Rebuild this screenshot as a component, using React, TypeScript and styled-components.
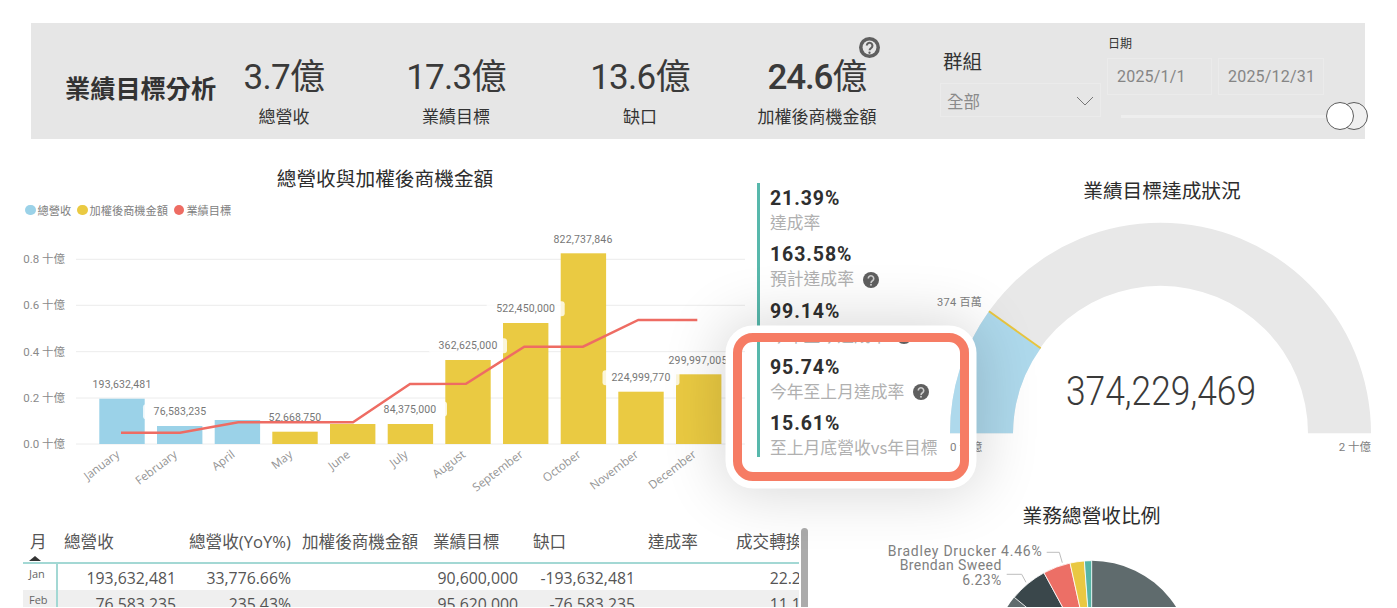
import React from "react";
import styled, { createGlobalStyle } from "styled-components";

const CJK = `"Noto Sans CJK TC", "Noto Sans CJK SC"`;
const DIN = `Roboto, ${CJK}, sans-serif`;
const UI = `"Open Sans", ${CJK}, sans-serif`;

const Global = createGlobalStyle`
  html, body { margin: 0; padding: 0; background: #fff; }
  #root { width: 1397px; height: 608px; overflow: hidden; }
`;

const Page = styled.div`
  width: 1397px;
  height: 608px;
  box-sizing: border-box;
  padding: 23px 0 1px 23px;
  position: relative;
  overflow: hidden;
  background: #fff;
  font-family: ${UI};
  display: flex;
  flex-direction: column;
`;

const Header = styled.header`
  margin-left: 8px;
  width: 1334px;
  height: 116px;
  flex: none;
  background: #e6e6e6;
  display: grid;
  grid-template-columns: 185px 136px 208px 160px 194px 193px 1fr;
  position: relative;
`;

const HeaderTitle = styled.h1`
  margin: 0;
  padding: 47px 0 0 34px;
  font: 700 25.2px/34px ${CJK}, sans-serif;
  color: #333;
  white-space: nowrap;
`;

const Kpi = styled.div`
  display: flex;
  flex-direction: column;
  align-items: center;
  padding-top: 32px;
  position: relative;
`;

const KpiValue = styled.div`
  font: 400 35px/46px ${DIN};
  letter-spacing: -0.7px;
  color: #3a3a3a;
  white-space: nowrap;
`;

const KpiStrong = styled.span`
  font-weight: 500;
  letter-spacing: -1.2px;
`;

const KpiLabel = styled.div`
  font: 400 17px/24px ${CJK}, sans-serif;
  color: #333;
  margin-top: 3px;
  white-space: nowrap;
`;

const KpiHelp = styled.span`
  position: absolute;
  left: 139px;
  top: 14px;
  display: flex;
`;

const Slicer = styled.div`
  display: flex;
  flex-direction: column;
  padding: 24px 0 0 29px;
`;

const SlicerTitle = styled.div`
  font: 400 19.5px/28px ${CJK}, sans-serif;
  color: #333;
`;

const Dropdown = styled.div`
  margin-top: 8px;
  margin-left: -3px;
  width: 161px;
  height: 34px;
  box-sizing: border-box;
  border: 1px solid #ebebeb;
  display: flex;
  align-items: center;
  justify-content: space-between;
  padding: 2px 6px 0 6px;
  font: 400 16.5px/24px ${CJK}, sans-serif;
  color: #8a8a8a;
`;

const DateSlicer = styled.div`
  display: flex;
  flex-direction: column;
  padding-top: 12px;
  position: relative;
`;

const DateTitle = styled.div`
  font: 400 12px/16px ${CJK}, sans-serif;
  color: #333;
  margin-left: 1px;
`;

const DateRow = styled.div`
  margin-top: 7px;
  display: flex;
  gap: 6px;
`;

const DateBox = styled.div<{ $w: number }>`
  width: ${(p) => p.$w}px;
  height: 37px;
  box-sizing: border-box;
  border: 1px solid #ebebeb;
  padding-left: 9px;
  font: 400 16px/35px ${DIN};
  letter-spacing: 0.2px;
  color: #858585;
`;

const Track = styled.div`
  margin: 20px 0 0 14px;
  width: 220px;
  height: 3px;
  background: #eeeeee;
`;

const Handle = styled.span<{ $left: number; $z: number }>`
  position: absolute;
  top: 79px;
  left: ${(p) => p.$left}px;
  z-index: ${(p) => p.$z};
  width: 28px;
  height: 28px;
  box-sizing: border-box;
  border-radius: 50%;
  border: 1.5px solid #5c5c5c;
  background: ${(p) => (p.$z > 1 ? "#ffffff" : "#f0f0f0")};
`;

const TopRow = styled.div`
  display: flex;
  height: 364px;
  flex: none;
`;

const ChartSection = styled.section`
  width: 734px;
  flex: none;
  padding-top: 25px;
`;

const SectionTitle = styled.h2<{ $right?: number; $top?: number }>`
  margin: ${(p) => p.$top ?? 0}px 0 0;
  font: 400 19.7px/28px ${CJK}, sans-serif;
  color: #2d2d2d;
  text-align: center;
  white-space: nowrap;
  padding-right: ${(p) => p.$right ?? 0}px;
`;

const Legend = styled.ul`
  list-style: none;
  margin: 11px 0 0;
  padding: 0 0 0 2px;
  height: 14px;
  display: flex;
  gap: 6px;
`;

const LegendItem = styled.li<{ $color: string }>`
  display: flex;
  align-items: center;
  gap: 2px;
  font: 400 11.2px/14px ${CJK}, sans-serif;
  color: #808080;
  &::before {
    content: "";
    width: 10.5px;
    height: 10.5px;
    border-radius: 50%;
    background: ${(p) => p.$color};
  }
`;

const ChartSvg = styled.svg`
  display: block;
  overflow: visible;
`;

const KpiColumn = styled.aside`
  width: 188px;
  flex: none;
  padding-top: 44px;
`;

const KpiList = styled.div`
  border-left: 3px solid #58b8ac;
  height: 274px;
  box-sizing: border-box;
  padding-left: 10px;
  display: flex;
  flex-direction: column;
  gap: 7.25px;
`;

const RateRow = styled.div`
  padding-top: 3px;
  height: 49px;
  box-sizing: border-box;
`;

const RateValue = styled.div`
  font: 700 19.5px/26px ${DIN};
  letter-spacing: 0.9px;
  color: #2f2f2f;
`;

const RateLabel = styled.div`
  display: flex;
  align-items: center;
  gap: 9px;
  font: 400 16.8px/20px ${CJK}, sans-serif;
  color: #b0b0b0;
  white-space: nowrap;
`;

const GaugeSection = styled.section`
  flex: 1;
  padding-top: 37px;
  margin-left: -1px;
`;

const BottomRow = styled.div`
  display: flex;
  flex: 1;
  min-height: 0;
`;

const TableWrap = styled.section`
  width: 785px;
  flex: none;
  margin-top: 25px;
  position: relative;
  overflow: hidden;
`;

const TableClip = styled.div`
  width: 776px;
  height: 100%;
  overflow: hidden;
`;

const Grid = "35px 125px 113px 131px 100px 115px 88px 95px";

const HeadRow = styled.div`
  width: 802px;
  height: 36px;
  box-sizing: border-box;
  display: grid;
  grid-template-columns: ${Grid};
  border-bottom: 2px solid #a3d8d4;
  position: relative;
`;

const HeadCell = styled.div<{ $pad?: number }>`
  padding-left: ${(p) => p.$pad ?? 6}px;
  font: 400 16.6px/28px ${UI};
  color: #555;
  white-space: nowrap;
  overflow: hidden;
`;

const SortMark = styled.span`
  position: absolute;
  left: 6px;
  top: 28px;
  width: 0;
  height: 0;
  border-left: 6px solid transparent;
  border-right: 6px solid transparent;
  border-bottom: 5px solid #333;
`;

const BodyRow = styled.div<{ $alt?: boolean }>`
  width: 802px;
  height: 26px;
  display: grid;
  grid-template-columns: ${Grid};
  background: ${(p) => (p.$alt ? "#efefef" : "#fff")};
`;

const MonthCell = styled.div`
  border-right: 2px solid #a3d8d4;
  padding-left: 6px;
  font: 400 11px/20px ${UI};
  color: #666;
`;

const NumCell = styled.div<{ $pad: number }>`
  text-align: right;
  padding-right: ${(p) => p.$pad}px;
  font: 400 15.8px/29px ${UI};
  color: #555;
  white-space: nowrap;
`;

const ScrollThumb = styled.span`
  position: absolute;
  right: 0;
  top: 0;
  bottom: 0;
  width: 7px;
  background: #ababab;
  border-radius: 4px 4px 0 0;
`;

const PieSection = styled.section`
  width: 567px;
  flex: none;
  position: relative;
  overflow: hidden;
`;

const Spotlight = styled.div`
  position: absolute;
  left: 733px;
  top: 333px;
  width: 236px;
  height: 148px;
  box-sizing: border-box;
  border: 9.5px solid #f67c64;
  border-radius: 20px;
  box-shadow: 0 0 0 7.5px #fff, 0 0 60px 12px rgba(0, 0, 0, 0.16);
  pointer-events: none;
  z-index: 5;
`;

const RingHelp = () => (
  <svg width={21} height={21} viewBox="0 0 20 20" style={{ flex: "none" }}>
    <circle cx="10" cy="10" r="10" fill="#5f5f5f" />
    <circle cx="10" cy="10" r="6.6" fill="#e6e6e6" />
    <path d="M7.4 8.2a2.7 2.7 0 1 1 4.1 2.3c-1 .6-1.4 1.1-1.4 2.2" fill="none" stroke="#5f5f5f" strokeWidth="2" />
    <circle cx="10" cy="15" r="1.1" fill="#5f5f5f" />
  </svg>
);

const HelpGlyph = styled.svg`
  flex: none;
  margin-top: 3px;
`;

const SolidHelp = () => (
  <HelpGlyph width={16} height={16} viewBox="0 0 20 20">
    <circle cx="10" cy="10" r="10" fill="#5f5f5f" />
    <path d="M6.6 8.2a3.4 3.4 0 1 1 5.2 2.8c-1.2.7-1.7 1.3-1.7 2.6" fill="none" stroke="#cfcfcf" strokeWidth="2" />
    <circle cx="10" cy="16" r="1.2" fill="#cfcfcf" />
  </HelpGlyph>
);

const bars = [
  { m: "January", x: 99.3, top: 398.7, c: "#9bd2e8" },
  { m: "February", x: 157, top: 426, c: "#9bd2e8" },
  { m: "April", x: 214.7, top: 420, c: "#9bd2e8" },
  { m: "May", x: 272.3, top: 431.7, c: "#eaca42" },
  { m: "June", x: 330, top: 424, c: "#eaca42" },
  { m: "July", x: 387.7, top: 424, c: "#eaca42" },
  { m: "August", x: 445.3, top: 360, c: "#eaca42" },
  { m: "September", x: 503, top: 323, c: "#eaca42" },
  { m: "October", x: 560.7, top: 253.3, c: "#eaca42" },
  { m: "November", x: 618.3, top: 391.7, c: "#eaca42" },
  { m: "December", x: 676, top: 374.3, c: "#eaca42" },
];

const dataLabels = [
  { t: "193,632,481", x: 122, y: 384, w: 74 },
  { t: "76,583,235", x: 180, y: 411.7, w: 74 },
  { t: "52,668,750", x: 295, y: 417, w: 66 },
  { t: "84,375,000", x: 410, y: 409, w: 74 },
  { t: "362,625,000", x: 468, y: 345.7, w: 78 },
  { t: "522,450,000", x: 525.7, y: 308.7, w: 78 },
  { t: "822,737,846", x: 583, y: 239, w: 68 },
  { t: "224,999,770", x: 641, y: 377.7, w: 77 },
  { t: "299,997,005", x: 698, y: 360, w: 66 },
];

const axis = [
  { t: "0.8 十億", y: 259.3 },
  { t: "0.6 十億", y: 305.3 },
  { t: "0.4 十億", y: 351.7 },
  { t: "0.2 十億", y: 398 },
  { t: "0.0 十億", y: 444 },
];

const linePts =
  "121,432.7 180,432.7 238.3,422.3 353,422.3 410,384 466,383.7 524.3,346.7 583,346.7 638.3,320 697.3,320";

const Combo = () => (
  <ChartSvg width={734} height={280} viewBox="23 217 734 280">
    {axis.map((a) => (
      <g key={a.t}>
        <line x1={76} x2={745} y1={a.y} y2={a.y} stroke="#ececec" strokeWidth={1} />
        <text x={65} y={a.y + 4} textAnchor="end" fontSize={11.5} fill="#8a8a8a" fontFamily={DIN}>
          {a.t}
        </text>
      </g>
    ))}
    {bars.map((b) => (
      <g key={b.m}>
        <rect x={b.x} y={b.top} width={45.4} height={444 - b.top} fill={b.c} />
        <text
          x={b.x + 21}
          y={456}
          textAnchor="end"
          fontSize={11.6}
          fill="#959595"
          fontFamily={UI}
          transform={`rotate(-37 ${b.x + 21} 456)`}
        >
          {b.m}
        </text>
      </g>
    ))}
    {dataLabels.map((d) => (
      <g key={d.t}>
        <rect x={d.x - d.w / 2} y={d.y - 7.5} width={d.w} height={15} rx={3} fill="#fff" opacity={0.8} />
        <text x={d.x} y={d.y + 3.6} textAnchor="middle" fontSize={10.5} letterSpacing={0.15} fill="#777" fontFamily={DIN}>
          {d.t}
        </text>
      </g>
    ))}
    <polyline points={linePts} fill="none" stroke="#ee6c63" strokeWidth={2.4} />
  </ChartSvg>
);

const Gauge = () => (
  <ChartSvg width={452} height={262} viewBox="945 204 452 262">
    <path d="M951 433.3A210.5 210.5 0 0 1 1372 433.3H1309A147.5 147.5 0 0 0 1014 433.3Z" fill="#e8e8e8" />
    <path d="M951 433.3A210.5 210.5 0 0 1 990 311.3L1041.7 348.3A147.5 147.5 0 0 0 1014 433.3Z" fill="#aed9ec" />
    <line x1={990} y1={311.3} x2={1041.7} y2={348.3} stroke="#e8c53e" strokeWidth={2} />
    <text x={1162} y={405} textAnchor="middle" fontSize={41} fontWeight={300} fill="#3a3a3a" fontFamily={DIN} textLength={190} lengthAdjust="spacingAndGlyphs">
      374,229,469
    </text>
    <text x={983} y={306} textAnchor="end" fontSize={11} letterSpacing={0.3} fill="#808080" fontFamily={DIN}>
      374 百萬
    </text>
    <text x={951} y={451} fontSize={11.5} fill="#808080" fontFamily={DIN}>
      0 十億
    </text>
    <text x={1372} y={451} textAnchor="end" fontSize={11.5} fill="#808080" fontFamily={DIN}>
      2 十億
    </text>
  </ChartSvg>
);

const pieCx = 1091.7;
const pieCy = 660.7;
const pieR = 100;
const polar = (a: number) => {
  const r = (a * Math.PI) / 180;
  return `${(pieCx + pieR * Math.sin(r)).toFixed(2)} ${(pieCy - pieR * Math.cos(r)).toFixed(2)}`;
};
const arc = (a0: number, a1: number) =>
  `M${pieCx} ${pieCy}L${polar(a0)}A${pieR} ${pieR} 0 0 0 ${polar(a1)}Z`;

const Pie = () => (
  <ChartSvg width={567} height={78} viewBox="808 529 567 78">
    <path d={`M${pieCx} ${pieCy}L${polar(0)}A${pieR} ${pieR} 0 1 1 ${polar(-50.7)}Z`} fill="#5f6b6d" />
    <g stroke="#fff" strokeWidth={0.8}>
      <path d={arc(-28.5, -50.7)} fill="#3a474b" />
      <path d={arc(-12.5, -28.5)} fill="#ec6f66" />
      <path d={arc(-4.2, -12.5)} fill="#e9c842" />
      <path d={arc(0, -4.2)} fill="#55b5a6" />
    </g>
    <polyline points="1046.7,552.3 1059.3,552.3 1062.3,562.7" fill="none" stroke="#bdbdbd" />
    <polyline points="1006.7,574.3 1021.7,574.3 1026,582.3" fill="none" stroke="#bdbdbd" />
    <text x={887.7} y={555.5} fontSize={14} fill="#808080" fontFamily={DIN} textLength={154} lengthAdjust="spacing">
      Bradley Drucker 4.46%
    </text>
    <text x={1001.7} y={570} textAnchor="end" fontSize={14} letterSpacing={0.4} fill="#808080" fontFamily={DIN}>
      Brendan Sweed
    </text>
    <text x={1001.7} y={585} textAnchor="end" fontSize={14} letterSpacing={0.4} fill="#808080" fontFamily={DIN}>
      6.23%
    </text>
  </ChartSvg>
);

const rates = [
  { v: "21.39%", l: "達成率" },
  { v: "163.58%", l: "預計達成率", help: true },
  { v: "99.14%", l: "今年至今達成率", help: true },
  { v: "95.74%", l: "今年至上月達成率", help: true },
  { v: "15.61%", l: "至上月底營收vs年目標" },
];

const heads: { t: string; pad?: number }[] = [
  { t: "月", pad: 7 },
  { t: "總營收" },
  { t: "總營收(YoY%)" },
  { t: "加權後商機金額" },
  { t: "業績目標" },
  { t: "缺口" },
  { t: "達成率" },
  { t: "成交轉換率" },
];

const pads = [7, 5, 6, 9, 7, 6, 2];
const rows = [
  { m: "Jan", c: ["193,632,481", "33,776.66%", "", "90,600,000", "-193,632,481", "", "22.22%"] },
  { m: "Feb", c: ["76,583,235", "235.43%", "", "95,620,000", "-76,583,235", "", "11.11%"] },
];

export default function App() {
  return (
    <Page>
      <Global />
      <Header>
        <HeaderTitle>業績目標分析</HeaderTitle>
        <Kpi>
          <KpiValue>3.7億</KpiValue>
          <KpiLabel>總營收</KpiLabel>
        </Kpi>
        <Kpi>
          <KpiValue>17.3億</KpiValue>
          <KpiLabel>業績目標</KpiLabel>
        </Kpi>
        <Kpi>
          <KpiValue>13.6億</KpiValue>
          <KpiLabel>缺口</KpiLabel>
        </Kpi>
        <Kpi>
          <KpiValue>
            <KpiStrong>24.6</KpiStrong>億
          </KpiValue>
          <KpiLabel>加權後商機金額</KpiLabel>
          <KpiHelp>
            <RingHelp />
          </KpiHelp>
        </Kpi>
        <Slicer>
          <SlicerTitle>群組</SlicerTitle>
          <Dropdown>
            全部
            <svg width="18" height="10" viewBox="0 0 18 10">
              <path d="M1 1l8 8 8-8" fill="none" stroke="#777" strokeWidth="1" />
            </svg>
          </Dropdown>
        </Slicer>
        <DateSlicer>
          <DateTitle>日期</DateTitle>
          <DateRow>
            <DateBox $w={105}>2025/1/1</DateBox>
            <DateBox $w={106}>2025/12/31</DateBox>
          </DateRow>
          <Track />
          <Handle $left={219} $z={2} />
          <Handle $left={233} $z={1} />
        </DateSlicer>
      </Header>

      <TopRow>
        <ChartSection>
          <SectionTitle $right={10}>總營收與加權後商機金額</SectionTitle>
          <Legend>
            <LegendItem $color="#9bd2e8">總營收</LegendItem>
            <LegendItem $color="#eaca42">加權後商機金額</LegendItem>
            <LegendItem $color="#ee6c63">業績目標</LegendItem>
          </Legend>
          <Combo />
        </ChartSection>
        <KpiColumn>
          <KpiList>
            {rates.map((r) => (
              <RateRow key={r.v}>
                <RateValue>{r.v}</RateValue>
                <RateLabel>
                  {r.l}
                  {r.help && <SolidHelp />}
                </RateLabel>
              </RateRow>
            ))}
          </KpiList>
        </KpiColumn>
        <GaugeSection>
          <SectionTitle $right={17}>業績目標達成狀況</SectionTitle>
          <Gauge />
        </GaugeSection>
      </TopRow>

      <BottomRow>
        <TableWrap>
          <TableClip>
            <HeadRow>
              {heads.map((h) => (
                <HeadCell key={h.t} $pad={h.pad}>
                  {h.t}
                </HeadCell>
              ))}
              <SortMark />
            </HeadRow>
            {rows.map((r, i) => (
              <BodyRow key={r.m} $alt={i % 2 === 1}>
                <MonthCell>{r.m}</MonthCell>
                {r.c.map((c, j) => (
                  <NumCell key={j} $pad={pads[j]}>
                    {c}
                  </NumCell>
                ))}
              </BodyRow>
            ))}
          </TableClip>
          <ScrollThumb />
        </TableWrap>
        <PieSection>
          <SectionTitle $top={-2}>業務總營收比例</SectionTitle>
          <Pie />
        </PieSection>
      </BottomRow>
      <Spotlight />
    </Page>
  );
}
